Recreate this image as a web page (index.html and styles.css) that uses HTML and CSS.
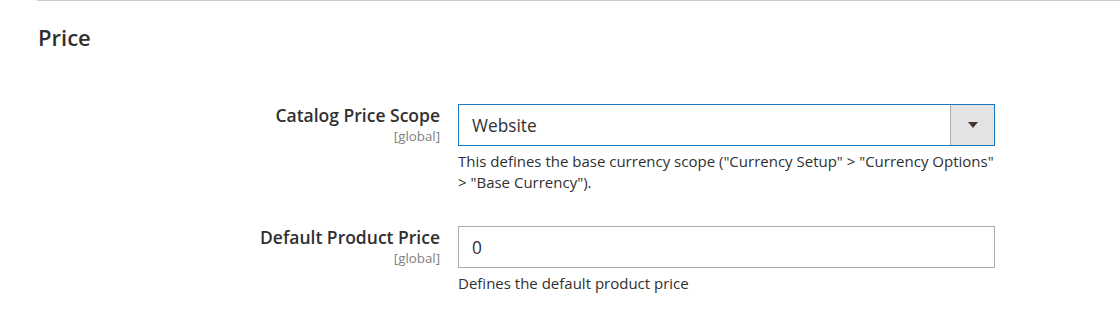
FILE: index.html
```html
<!DOCTYPE html>
<html lang="en">
<head>
  <meta charset="UTF-8" />
  <title>Price</title>
  <link rel="stylesheet" href="styles.css">
</head>
<body>
  <div class="section">
    <h2 class="section-title">Price</h2>

    <div class="field-row">
      <div class="field-label">
        <label for="price-scope">Catalog Price Scope</label>
        <span class="scope">[global]</span>
      </div>
      <div class="field-control">
        <div class="select-wrap">
          <select id="price-scope">
            <option>Website</option>
            <option>Global</option>
          </select>
          <span class="select-arrow"></span>
        </div>
        <p class="note">This defines the base currency scope ("Currency Setup" &gt; "Currency Options" &gt;&nbsp;"Base Currency").</p>
      </div>
    </div>

    <div class="field-row">
      <div class="field-label">
        <label for="default-price">Default Product Price</label>
        <span class="scope">[global]</span>
      </div>
      <div class="field-control">
        <input type="text" id="default-price" value="0" />
        <p class="note">Defines the default product price</p>
      </div>
    </div>
  </div>
</body>
</html>
```

FILE: styles.css
```css
body {
  margin: 0;
  background: #fff;
  font-family: 'Open Sans', 'Liberation Sans', sans-serif;
  color: #303030;
}

.section {
  margin-left: 37px;
  border-top: 1px solid #cccccc;
  padding-top: 22px;
}

.section-title {
  margin: 0 0 0 1px;
  font-size: 22px;
  font-weight: 600;
  line-height: 28px;
  color: #303030;
}

.field-row {
  display: flex;
  gap: 18px;
  margin-top: 53px;
}

.field-row + .field-row {
  margin-top: 33px;
}

.field-label {
  width: 403px;
  text-align: right;
}

.field-label label {
  display: block;
  font-size: 17.5px;
  font-weight: 600;
  line-height: 22px;
  color: #303030;
}

.field-label .scope {
  display: block;
  font-size: 13.3px;
  line-height: 20px;
  color: #808080;
}

.field-control {
  width: 537px;
}

.select-wrap {
  position: relative;
}

select,
input[type="text"] {
  box-sizing: border-box;
  display: block;
  width: 100%;
  height: 42px;
  padding: 0 13px;
  font-family: inherit;
  font-size: 17.3px;
  color: #303030;
  background: #fff;
  border: 1px solid #adadad;
  border-radius: 0;
  outline: none;
}

select {
  appearance: none;
  -webkit-appearance: none;
  border-color: #1979c3;
}

.select-arrow {
  position: absolute;
  top: 1px;
  right: 1px;
  bottom: 1px;
  width: 43px;
  background: #e3e3e3;
  border-left: 1px solid #adadad;
  pointer-events: none;
}

.select-arrow::after {
  content: "";
  position: absolute;
  left: 17px;
  top: 17px;
  border-left: 5px solid transparent;
  border-right: 5px solid transparent;
  border-top: 6px solid #41362f;
}

.note {
  margin: 5px 0 0;
  font-size: 15px;
  line-height: 21px;
  color: #303030;
}
```
